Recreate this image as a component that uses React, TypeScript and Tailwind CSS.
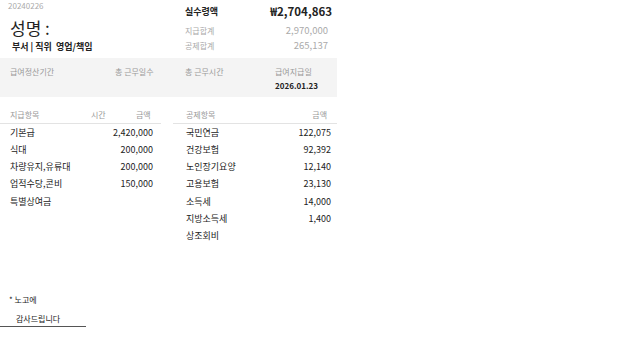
const font = { fontFamily: '"Noto Sans CJK KR", "Noto Sans", sans-serif' };

const pay = [
  ["기본급", "2,420,000"],
  ["식대", "200,000"],
  ["차량유지,유류대", "200,000"],
  ["업적수당,콘비", "150,000"],
  ["특별상여금", ""],
];

const deduct = [
  ["국민연금", "122,075"],
  ["건강보험", "92,392"],
  ["노인장기요양", "12,140"],
  ["고용보험", "23,130"],
  ["소득세", "14,000"],
  ["지방소득세", "1,400"],
  ["상조회비", ""],
];

export default function App() {
  return (
    <div className="w-[644px] h-[362px] bg-white text-[#222]" style={font}>
      <div className="w-[337px]">
        {/* header */}
        <div className="h-[58px] flex">
          <div className="w-[172px] pl-[8px] pt-[1px]">
            <div className="text-[8px] text-[#aaa] leading-[10px]">20240226</div>
            <div className="text-[17px] leading-[20px] mt-[7px] pl-[2px]">성명 :</div>
            <div className="text-[9px] font-bold leading-[12px] mt-[3px] pl-[4px]">부서 | 직위&nbsp;&nbsp;영업/책임</div>
          </div>
          <div className="flex-1 pl-[13px] pr-[5px] pt-[3px]">
            <div className="flex justify-between items-center h-[18px]">
              <span className="text-[9px] font-bold">실수령액</span>
              <span className="text-[11.5px] font-bold">₩2,704,863</span>
            </div>
            <div className="flex justify-between items-center h-[15px] mt-[2px] text-[#aaa] pr-[4px]">
              <span className="text-[8px]">지급합계</span>
              <span className="text-[9.5px]">2,970,000</span>
            </div>
            <div className="flex justify-between items-center h-[15px] text-[#aaa] pr-[4px]">
              <span className="text-[8px]">공제합계</span>
              <span className="text-[9.5px]">265,137</span>
            </div>
          </div>
        </div>

        {/* period band */}
        <div className="h-[39px] bg-[#f4f4f4] flex text-[8px] text-[#999] pt-[8px]">
          <div className="w-[107px] pl-[10px]">급여정산기간</div>
          <div className="w-[65px] pl-[8px]">총 근무일수</div>
          <div className="w-[103px] pl-[13px]">총 근무시간</div>
          <div className="flex-1">
            <div>급여지급일</div>
            <div className="text-[8px] font-bold text-[#222] mt-[2px]">2026.01.23</div>
          </div>
        </div>

        {/* tables */}
        <div className="flex justify-between mt-[10px]">
          <div className="w-[161px]">
            <div className="flex h-[15px] items-center border-b border-[#e3e3e3] text-[8px] text-[#999] pb-[1px] box-content">
              <span className="pl-[10px] flex-1">지급항목</span>
              <span className="w-[45px]">시간</span>
              <span className="w-[25px]">금액</span>
            </div>
            <div>
              {pay.map(([k, v]) => (
                <div key={k} className="flex justify-between items-center h-[17.2px] text-[9px] pl-[10px] pr-[8px]">
                  <span>{k}</span>
                  <span>{v}</span>
                </div>
              ))}
            </div>
          </div>
          <div className="w-[164px]">
            <div className="flex justify-between h-[15px] items-center border-b border-[#e3e3e3] text-[8px] text-[#999] pb-[1px] box-content pl-[13px] pr-[10px]">
              <span>공제항목</span>
              <span>금액</span>
            </div>
            <div>
              {deduct.map(([k, v]) => (
                <div key={k} className="flex justify-between items-center h-[17.2px] text-[9px] pl-[13px] pr-[6px]">
                  <span>{k}</span>
                  <span>{v}</span>
                </div>
              ))}
            </div>
          </div>
        </div>
      </div>

      {/* footer note */}
      <div className="mt-[50px] w-[86px]">
        <div className="text-[8px] pl-[9px] leading-[12px]">* 노고에</div>
        <div className="text-[8px] pl-[16px] leading-[12px] mt-[7px] pb-[1px] border-b border-[#555]">감사드립니다</div>
      </div>
    </div>
  );
}
